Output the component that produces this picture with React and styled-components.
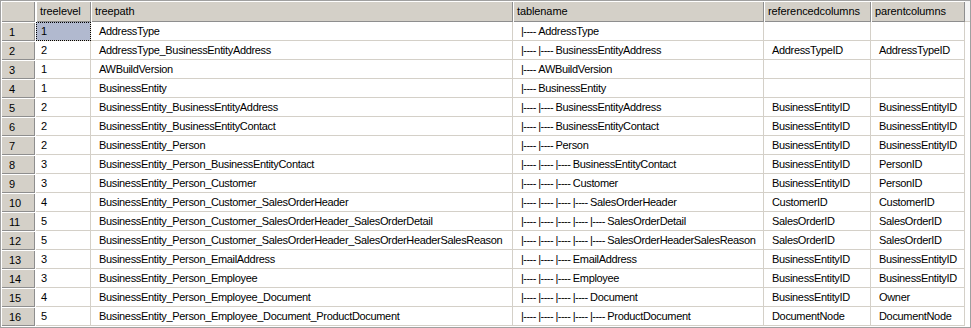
import React from 'react';
import styled, { createGlobalStyle } from 'styled-components';

const Global = createGlobalStyle`
  *, *::before, *::after { box-sizing: border-box; }
  html, body { margin: 0; padding: 0; background: #ffffff; }
  body { font-family: "Liberation Sans", Arial, sans-serif; font-size: 11px; color: #000; }
`;

const Frame = styled.div`
  width: 971px;
  height: 328px;
  border: 1px solid #a0a0a0;
  background: #ffffff;
  display: grid;
  grid-template-columns: 35px 55px 422px 251px 107px 94px 1fr;
  grid-template-rows: 21px repeat(16, 19px) 1fr;
  overflow: hidden;
  font-family: "Liberation Sans", Arial, sans-serif;
  font-size: 11px;
`;

const Button3D = styled.div`
  background: #d4d0c8;
  box-shadow: inset 1px 1px 0 #ffffff, inset -1px -1px 0 #8e8e8e;
  display: flex;
  align-items: center;
  white-space: nowrap;
  overflow: hidden;
  color: #000;
`;

const Corner = styled(Button3D)`
  border-right: 1px solid #ffffff;
`;

const HeadCell = styled(Button3D)`
  padding-left: 4px;
  padding-bottom: 1px;
  letter-spacing: -0.1px;
`;

const HeadFiller = styled.div`
  background: #f4f4f4;
  border-bottom: 1px solid #d4d0c8;
`;

const RowHead = styled(Button3D)`
  border-right: 1px solid #ffffff;
  padding-left: 8px;
  letter-spacing: -0.2px;
`;

const Cell = styled.div`
  display: flex;
  align-items: center;
  white-space: nowrap;
  overflow: hidden;
  padding-left: ${p => p.$pad}px;
  letter-spacing: -0.33px;
  border-right: 1px solid #d4d0c8;
  border-bottom: 1px solid #d4d0c8;
  background: ${p => (p.$selected ? '#b1b9cf' : '#ffffff')};
  outline: ${p => (p.$selected ? '1px dotted #000' : 'none')};
  outline-offset: -1px;
  color: #000;
`;

const Filler = styled.div`
  background: #ffffff;
`;

const Tree = styled.span`
  white-space: pre;
  letter-spacing: -0.55px;
`;

const headers = ['treelevel', 'treepath', 'tablename', 'referencedcolumns', 'parentcolumns'];

const rows = [
  [1, 'AddressType', 'AddressType', '', ''],
  [2, 'AddressType_BusinessEntityAddress', 'BusinessEntityAddress', 'AddressTypeID', 'AddressTypeID'],
  [1, 'AWBuildVersion', 'AWBuildVersion', '', ''],
  [1, 'BusinessEntity', 'BusinessEntity', '', ''],
  [2, 'BusinessEntity_BusinessEntityAddress', 'BusinessEntityAddress', 'BusinessEntityID', 'BusinessEntityID'],
  [2, 'BusinessEntity_BusinessEntityContact', 'BusinessEntityContact', 'BusinessEntityID', 'BusinessEntityID'],
  [2, 'BusinessEntity_Person', 'Person', 'BusinessEntityID', 'BusinessEntityID'],
  [3, 'BusinessEntity_Person_BusinessEntityContact', 'BusinessEntityContact', 'BusinessEntityID', 'PersonID'],
  [3, 'BusinessEntity_Person_Customer', 'Customer', 'BusinessEntityID', 'PersonID'],
  [4, 'BusinessEntity_Person_Customer_SalesOrderHeader', 'SalesOrderHeader', 'CustomerID', 'CustomerID'],
  [5, 'BusinessEntity_Person_Customer_SalesOrderHeader_SalesOrderDetail', 'SalesOrderDetail', 'SalesOrderID', 'SalesOrderID'],
  [5, 'BusinessEntity_Person_Customer_SalesOrderHeader_SalesOrderHeaderSalesReason', 'SalesOrderHeaderSalesReason', 'SalesOrderID', 'SalesOrderID'],
  [3, 'BusinessEntity_Person_EmailAddress', 'EmailAddress', 'BusinessEntityID', 'BusinessEntityID'],
  [3, 'BusinessEntity_Person_Employee', 'Employee', 'BusinessEntityID', 'BusinessEntityID'],
  [4, 'BusinessEntity_Person_Employee_Document', 'Document', 'BusinessEntityID', 'Owner'],
  [5, 'BusinessEntity_Person_Employee_Document_ProductDocument', 'ProductDocument', 'DocumentNode', 'DocumentNode'],
];

export default function App() {
  return (
    <>
      <Global />
      <Frame>
        <Corner />
        {headers.map(h => (
          <HeadCell key={h}>{h}</HeadCell>
        ))}
        <HeadFiller />
        {rows.map((r, i) => (
          <React.Fragment key={i}>
            <RowHead>{i + 1}</RowHead>
            <Cell $pad={5} $selected={i === 0}>{r[0]}</Cell>
            <Cell $pad={8}>{r[1]}</Cell>
            <Cell $pad={8}>
              <Tree>{'|---- '.repeat(r[0])}</Tree>
              {r[2]}
            </Cell>
            <Cell $pad={8}>{r[3]}</Cell>
            <Cell $pad={8}>{r[4]}</Cell>
            <Filler />
          </React.Fragment>
        ))}
      </Frame>
    </>
  );
}
